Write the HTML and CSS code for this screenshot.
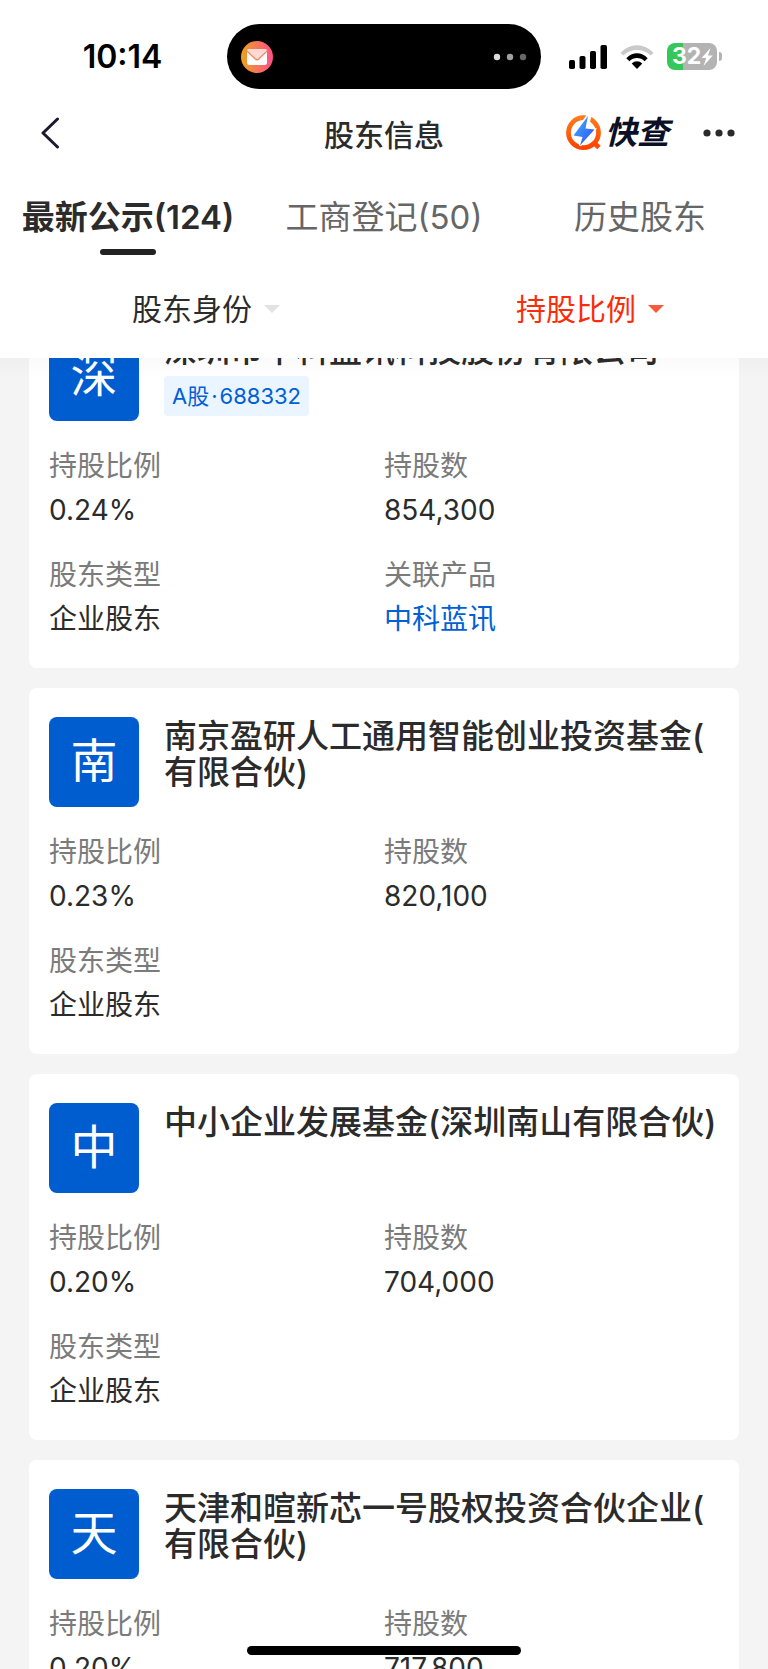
FILE: index.html
```html
<!DOCTYPE html>
<html lang="zh-CN">
<head>
<meta charset="utf-8">
<meta name="viewport" content="width=device-width, initial-scale=1">
<title>股东信息</title>
<link rel="stylesheet" href="styles.css">
</head>
<body>
<div class="app">
  <header class="top">
    <div class="status">
      <time class="clock">10:14</time>
      <div class="island">
        <svg class="mail" viewBox="0 0 32 32" aria-hidden="true">
          <defs><linearGradient id="mailbg" x1="0" y1="0" x2="1" y2="0"><stop offset="0" stop-color="#efa020"/><stop offset="1" stop-color="#ff4f8b"/></linearGradient></defs>
          <circle cx="16" cy="16" r="16" fill="url(#mailbg)"/>
          <rect x="6" y="8" width="20" height="16" rx="2.5" fill="#fff"/>
          <path d="M6.500 8.800Q7.200 8 8.500 8H23.500Q24.800 8 25.500 8.800L17.500 17.500Q16 19 14.500 17.500Z" fill="#ffd9d3"/>
          <path d="M6 10L14.300 18Q16 19.500 17.700 18L26 10" fill="none" stroke="#f8825c" stroke-width="1.300"/>
        </svg>
        <svg class="island-dots" viewBox="0 0 34 8" aria-hidden="true"><circle cx="4" cy="4" r="3.200" fill="#dcdcdc"/><circle cx="17" cy="4" r="3.200" fill="#a0a0a0"/><circle cx="30" cy="4" r="3.200" fill="#666"/></svg>
      </div>
      <div class="indicators">
        <svg class="signal" viewBox="0 0 38 24" aria-label="信号"><rect x="0" y="15" width="6" height="9" rx="1.800"/><rect x="10.500" y="11" width="6" height="13" rx="1.800"/><rect x="21" y="6" width="6" height="18" rx="1.800"/><rect x="31.500" y="0" width="6.500" height="24" rx="1.800"/></svg>
        <svg class="wifi" viewBox="0 0 34 24" aria-label="无线网络">
          <path d="M0.500 7.700Q7.500 0.200 17 0.200T33.500 7.700L30.700 10.500Q25 5 17 5T3.300 10.500Z" fill="#c9c9c9"/>
          <path d="M6.300 13.300Q11 8.300 17 8.300T27.700 13.300L24.600 16.200Q21.300 12.900 17 12.900T9.400 16.200Z"/>
          <path d="M11.700 18.600Q14 16.200 17 16.200T22.300 18.600L17 24Z"/>
        </svg>
        <div class="battery">
          <span class="level">32</span>
          <svg class="bolt" viewBox="0 0 12 18" aria-hidden="true"><path d="M9.500 0L0.500 10H5.200L2.500 18L11.800 7.600H7Z" fill="#fff"/></svg>
        </div>
      </div>
    </div>
    <nav class="bar">
      <button class="back" aria-label="返回"><svg viewBox="0 0 18 32"><path d="M16.500 2L2 16L16.500 30" fill="none" stroke="#1a1a2c" stroke-width="3" stroke-linecap="round" stroke-linejoin="round"/></svg></button>
      <h1 class="title">股东信息</h1>
      <div class="actions">
        <a class="brand" href="#">
          <svg viewBox="0 0 36 36" aria-hidden="true">
            <defs><linearGradient id="ring" x1="0" y1="0" x2="0" y2="1"><stop offset="0" stop-color="#ff7a1a"/><stop offset="1" stop-color="#ff4400"/></linearGradient>
            <linearGradient id="flash" x1="0" y1="0" x2="1" y2="1"><stop offset="0" stop-color="#45b4ff"/><stop offset="1" stop-color="#2b4cf0"/></linearGradient></defs>
            <circle cx="17.500" cy="17.700" r="15" fill="none" stroke="url(#ring)" stroke-width="4.800"/>
            <path d="M27 27L33 32.500" stroke="#ff4a05" stroke-width="5"/>
            <path d="M22 0L7.500 20.500L16.500 22L14 30.500L28.500 14.500L21 13.500L24.500 0Z" fill="#fff" stroke="#fff" stroke-width="2.400"/>
            <path d="M22 1L7.500 20.500L16.500 22L14 30.500L28.500 14.500L19.500 13.500Z" fill="url(#flash)"/>
          </svg>
          <span class="brand-name">快查</span>
        </a>
        <button class="more" aria-label="更多"><svg viewBox="0 0 32 8"><circle cx="4" cy="4" r="3.600"/><circle cx="16" cy="4" r="3.600"/><circle cx="28" cy="4" r="3.600"/></svg></button>
      </div>
    </nav>
    <div class="tabs" role="tablist">
      <button class="tab active" role="tab" aria-selected="true">最新公示(124)</button>
      <button class="tab" role="tab" aria-selected="false">工商登记(50)</button>
      <button class="tab" role="tab" aria-selected="false">历史股东</button>
    </div>
    <div class="filters">
      <button class="filter">股东身份</button>
      <button class="filter on">持股比例</button>
    </div>
  </header>
  <main class="list">
    <article class="card">
      <div class="head"><div class="avatar">深</div><div><h2 class="name">深圳市中科蓝讯科技股份有限公司</h2><span class="tag">A股<span class="dot">·</span>688332</span></div></div>
      <dl class="facts">
        <div><dt>持股比例</dt><dd>0.24%</dd></div>
        <div><dt>持股数</dt><dd>854,300</dd></div>
        <div><dt>股东类型</dt><dd>企业股东</dd></div>
        <div><dt>关联产品</dt><dd><a href="#">中科蓝讯</a></dd></div>
      </dl>
    </article>
    <article class="card">
      <div class="head"><div class="avatar">南</div><h2 class="name">南京盈研人工通用智能创业投资基金(有限合伙)</h2></div>
      <dl class="facts">
        <div><dt>持股比例</dt><dd>0.23%</dd></div>
        <div><dt>持股数</dt><dd>820,100</dd></div>
        <div><dt>股东类型</dt><dd>企业股东</dd></div>
      </dl>
    </article>
    <article class="card">
      <div class="head"><div class="avatar">中</div><h2 class="name">中小企业发展基金(深圳南山有限合伙)</h2></div>
      <dl class="facts">
        <div><dt>持股比例</dt><dd>0.20%</dd></div>
        <div><dt>持股数</dt><dd>704,000</dd></div>
        <div><dt>股东类型</dt><dd>企业股东</dd></div>
      </dl>
    </article>
    <article class="card">
      <div class="head"><div class="avatar">天</div><h2 class="name">天津和暄新芯一号股权投资合伙企业(有限合伙)</h2></div>
      <dl class="facts">
        <div><dt>持股比例</dt><dd>0.20%</dd></div>
        <div><dt>持股数</dt><dd>717,800</dd></div>
        <div><dt>股东类型</dt><dd>企业股东</dd></div>
      </dl>
    </article>
  </main>
  <div class="home"></div>
</div>
</body>
</html>
```
FILE: styles.css
```css
* { box-sizing: border-box; margin: 0; padding: 0; }
body {
  background: #f4f4f4;
  color: #2b2b2b;
  font-family: Inter, "Noto Sans CJK SC", sans-serif;
}
button { border: 0; background: none; font: inherit; color: inherit; cursor: pointer; }
a { color: #0060d6; text-decoration: none; }
svg { display: block; }

.app { height: 100vh; display: flex; flex-direction: column; overflow: hidden; }

.top { position: relative; z-index: 1; background: #fff; }
.top::after {
  content: "";
  position: absolute;
  top: 100%;
  left: 0;
  right: 0;
  height: 20px;
  background: linear-gradient(rgba(0, 0, 0, 0.02), rgba(0, 0, 0, 0));
}

.status {
  display: grid;
  grid-template-columns: 1fr 314px 1fr;
  align-items: center;
  padding-top: 24px;
}
.clock { padding-left: 18px; text-align: center; font-size: 32px; font-weight: 600; color: #000; }
.island {
  display: flex;
  align-items: center;
  justify-content: space-between;
  height: 65px;
  padding: 0 14px;
  border-radius: 33px;
  background: #000;
}
.mail { width: 32px; height: 32px; }
.island-dots { width: 34px; height: 8px; }
.indicators { display: flex; align-items: center; padding-left: 28px; gap: 13px; }
.signal { width: 38px; height: 24px; }
.wifi { width: 34px; height: 24px; }
.battery {
  position: relative;
  display: flex;
  align-items: center;
  width: 50px;
  height: 27px;
  padding-left: 5px;
  border-radius: 8px;
  background: linear-gradient(90deg, #34c759 32%, #b3b3b3 32%);
}
.battery::after {
  content: "";
  position: absolute;
  left: 52px;
  top: 9px;
  width: 3px;
  height: 9px;
  border-radius: 0 4px 4px 0;
  background: #b3b3b3;
}
.level { color: #fff; font-size: 23px; font-weight: 700; line-height: 27px; }
.bolt { width: 12px; height: 18px; }

.bar {
  display: grid;
  grid-template-columns: 1fr auto 1fr;
  align-items: center;
  height: 88px;
  padding: 0 33px;
}
.back { justify-self: start; padding: 0 8px; }
.back svg { width: 18px; height: 32px; }
.title { padding-top: 3px; font-size: 30px; font-weight: 500; line-height: 40px; }
.actions { display: flex; align-items: center; justify-content: flex-end; gap: 34px; }
.brand { display: flex; align-items: center; gap: 3px; color: #0b1026; }
.brand svg { width: 36px; height: 36px; }
.brand-name { font-size: 32px; font-weight: 700; font-style: italic; line-height: 36px; }
.more svg { width: 32px; height: 8px; fill: #2b2b2b; }

.tabs { display: grid; grid-template-columns: repeat(3, 1fr); height: 83px; }
.tab { position: relative; padding-bottom: 4px; font-size: 33px; line-height: 40px; color: #666; }
.tab.active { font-weight: 600; color: #2b2b2b; }
.tab.active::after {
  content: "";
  position: absolute;
  left: calc(50% - 28px);
  bottom: 5px;
  width: 56px;
  height: 6px;
  border-radius: 3px;
  background: #222;
}

.filters { display: grid; grid-template-columns: 1fr 1fr; height: 98px; }
.filter {
  display: grid;
  grid-template-columns: 1fr auto 1fr;
  align-items: center;
  column-gap: 12px;
  font-size: 30px;
  line-height: 40px;
}
.filter::before { content: ""; }
.filter::after {
  content: "";
  justify-self: start;
  border: 8px solid transparent;
  border-top-color: #e2e2e4;
  border-bottom: 0;
}
.filter.on { color: #fa2c0a; }
.filter.on::after { border-top-color: #fa5a3c; }

.list {
  flex: 1;
  min-height: 0;
  display: flex;
  flex-direction: column;
  gap: 20px;
  padding: 0 29px;
  overflow: hidden;
}
.card { flex: none; padding: 29px 20px 27px; border-radius: 8px; background: #fff; }
.card:first-child { margin-top: -56px; }
.head { display: grid; grid-template-columns: 90px 1fr; column-gap: 25px; }
.avatar {
  height: 90px;
  border-radius: 8px;
  background: #005dd0;
  color: #fff;
  font-size: 47px;
  line-height: 88px;
  text-align: center;
}
.name { padding-top: 1px; font-size: 33px; font-weight: 500; line-height: 36px; line-break: anywhere; }
.tag {
  display: block;
  width: max-content;
  margin-top: 8px;
  padding: 0 8px;
  border-radius: 4px;
  background: #ebf5ff;
  color: #0060d6;
  font-size: 22px;
  line-height: 40px;
}
.dot { padding: 0 2px; }
.facts {
  display: grid;
  grid-template-columns: 1fr 1fr;
  row-gap: 21px;
  margin-top: 23px;
  font-size: 28px;
  line-height: 44px;
}
.facts dt { color: #7b7b7b; }

.home {
  position: fixed;
  left: 50%;
  bottom: 14px;
  z-index: 2;
  width: 274px;
  height: 9px;
  margin-left: -137px;
  border-radius: 5px;
  background: #000;
}
```
